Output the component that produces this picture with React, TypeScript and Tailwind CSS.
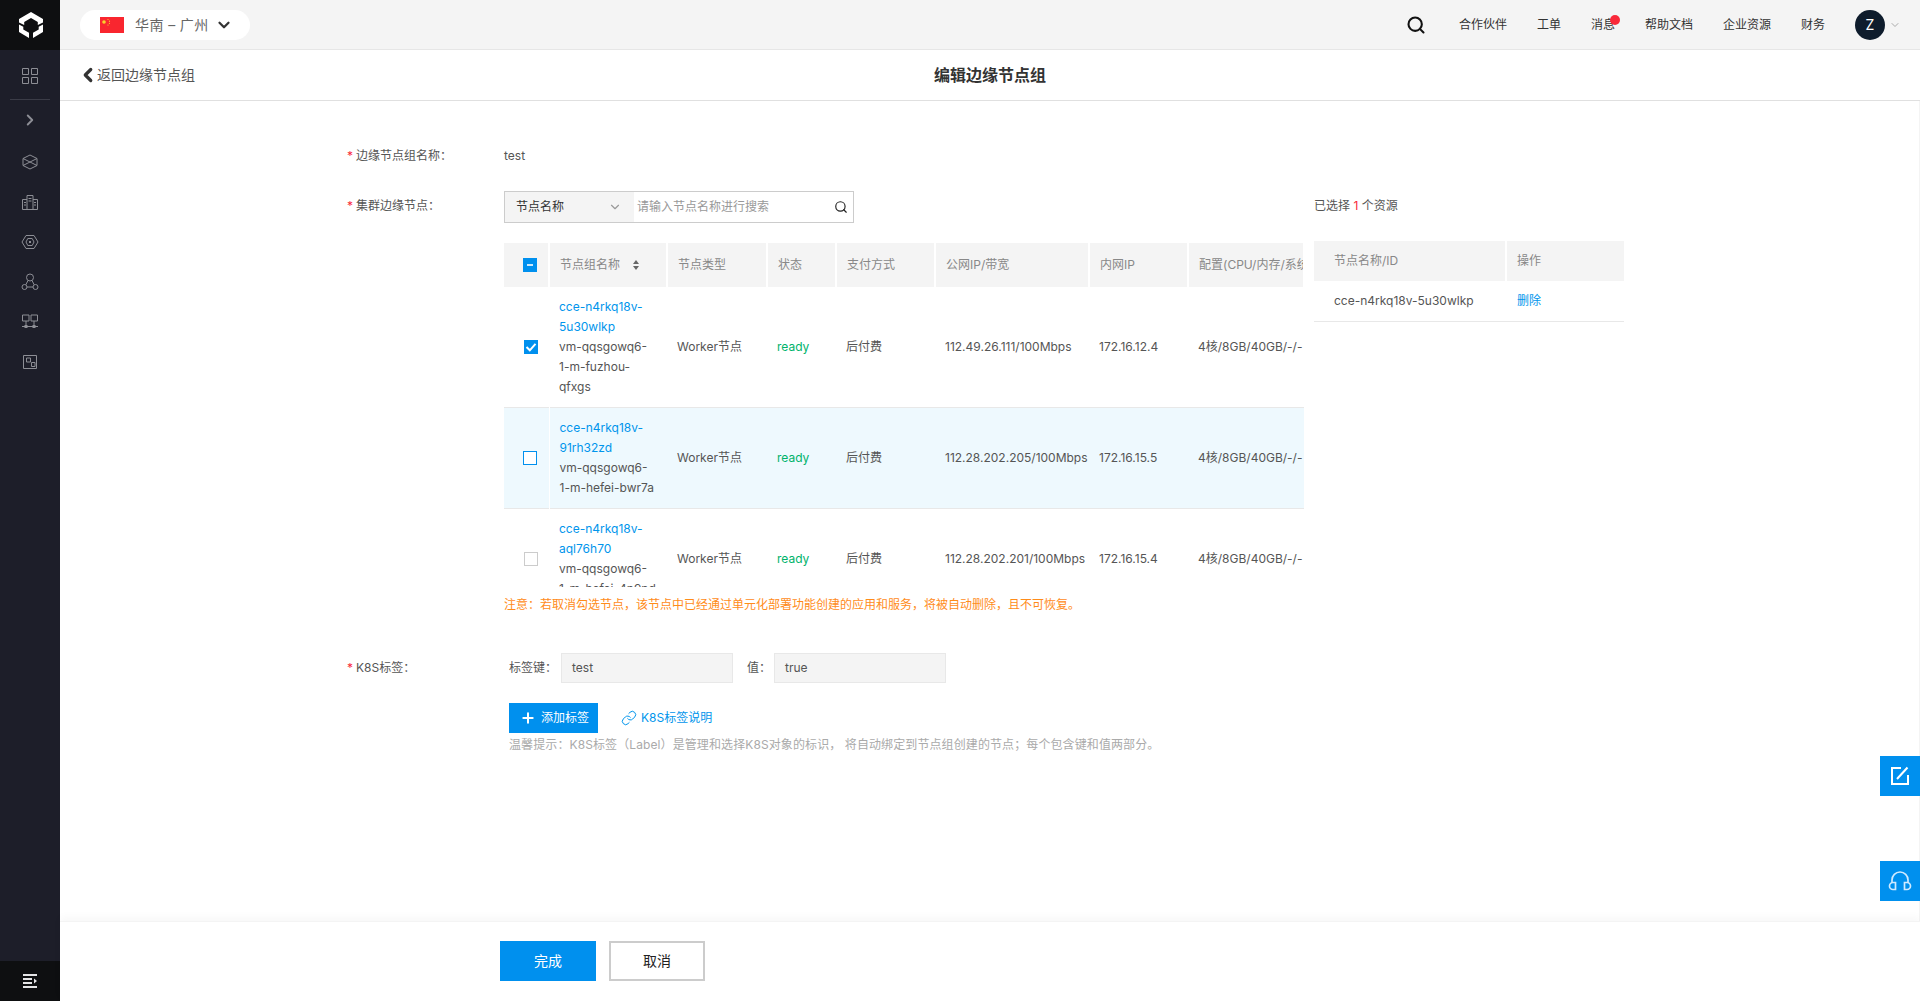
import { ChevronDown, ChevronLeft, ChevronRight, Link, Plus, Search } from "lucide-react";

const NAV_LINKS = ["合作伙伴", "工单", "消息", "帮助文档", "企业资源", "财务"];

const COLUMNS = [
  { label: "节点类型", w: "w-[100px]" },
  { label: "状态", w: "w-[69px]" },
  { label: "支付方式", w: "w-[99px]" },
  { label: "公网IP/带宽", w: "w-[154px]" },
  { label: "内网IP", w: "w-[99px]" },
  { label: "配置(CPU/内存/系统盘/数据盘)", w: "w-[116px]" },
];

const ROWS = [
  { id: ["cce-n4rkq18v-", "5u30wlkp"], name: ["vm-qqsgowq6-", "1-m-fuzhou-", "qfxgs"], ip: "112.49.26.111/100Mbps", lan: "172.16.12.4", state: "checked" },
  { id: ["cce-n4rkq18v-", "91rh32zd"], name: ["vm-qqsgowq6-", "1-m-hefei-bwr7a"], ip: "112.28.202.205/100Mbps", lan: "172.16.15.5", state: "hover" },
  { id: ["cce-n4rkq18v-", "aql76h70"], name: ["vm-qqsgowq6-", "1-m-hefei-4n9nd"], ip: "112.28.202.201/100Mbps", lan: "172.16.15.4", state: "none" },
];

function Logo() {
  return (
    <svg width="26" height="28" viewBox="0 0 26 28" fill="#fff">
      <path d="M13 1 25 8v3.500l-5.200 2.600V11L13 7 6.200 11v3.100L1 11.500V8z" />
      <path d="M1 13.500l4.300 2.200v2.800l5.700 3.300V27L1 21z" />
      <path d="M25 13.500l-4.300 2.200v2.800L15 21.800V27l10-6z" />
    </svg>
  );
}

function SideIcon({ children }: { children: React.ReactNode }) {
  return (
    <div className="h-10 flex items-center justify-center">
      <svg width="18" height="18" viewBox="0 0 18 18" fill="none" stroke="#8d8e95" strokeWidth="1">
        {children}
      </svg>
    </div>
  );
}

function FlagCN() {
  return (
    <svg width="24" height="16" viewBox="0 0 24 16">
      <rect width="24" height="16" fill="#f9262f" />
      <circle cx="4" cy="5" r="1.800" fill="#f8d32b" />
      <circle cx="8" cy="2.500" r="0.600" fill="#f8d32b" />
      <circle cx="9.500" cy="4.200" r="0.600" fill="#f8d32b" />
      <circle cx="9.500" cy="6.300" r="0.600" fill="#f8d32b" />
      <circle cx="8" cy="8" r="0.600" fill="#f8d32b" />
    </svg>
  );
}

function Checkbox({ state }: { state: string }) {
  if (state === "checked") {
    return (
      <span className="w-[14px] h-[14px] bg-[#0090ee] flex items-center justify-center">
        <svg width="12" height="12" viewBox="0 0 12 12" fill="none" stroke="#fff" strokeWidth="2">
          <path d="M1.500 6 4.800 9.300 10.500 2.800" />
        </svg>
      </span>
    );
  }
  if (state === "partial") {
    return (
      <span className="w-[14px] h-[14px] bg-[#0090ee] flex items-center justify-center">
        <span className="w-[6px] h-[2px] bg-white/80" />
      </span>
    );
  }
  return <span className={`w-[14px] h-[14px] border ${state === "hover" ? "border-[#0090ee]" : "border-[#cccccc]"} bg-white`} />;
}

export default function App() {
  return (
    <div className="relative w-full h-[1001px] flex overflow-hidden bg-white text-xs text-[#555] [font-family:Inter,'Noto_Sans_CJK_SC',sans-serif]">
      {/* 侧边栏 */}
      <aside className="w-[60px] shrink-0 flex flex-col bg-[#1d1e29]">
        <div className="h-[50px] bg-[#0e0f11] flex items-center justify-center pl-[2px]">
          <Logo />
        </div>
        <div className="h-[50px] flex items-center justify-center border-b border-[#3b3c47] mx-[10px] pt-[2px]">
          <svg width="18" height="18" viewBox="0 0 18 18" fill="none" stroke="#8d8e95" strokeWidth="1">
            <path d="M1.500 1.500h6v6h-6zM10.500 1.500h6v6h-6zM1.500 10.500h6v6h-6zM10.500 10.500h6v6h-6z" />
          </svg>
        </div>
        <div className="h-[40px] flex items-center justify-center text-[#8d8e95]">
          <ChevronRight size={18} strokeWidth={2.500} />
        </div>
        <div className="flex flex-col mt-[2px]">
          <SideIcon>
            <path d="M9 2 16 5.500v7L9 16 2 12.500v-7zM2 5.500l14 7M16 5.500l-14 7" />
          </SideIcon>
          <SideIcon>
            <path d="M6 16.500V2.500h6v14M1.500 16.500V6.500H6M12 6.500h4.500v10M1.500 16.500h15M7.500 5.500h3M7.500 8h3M3 9.500h2M13 9.500h2M3 12h2M13 12h2" />
          </SideIcon>
          <SideIcon>
            <path d="M5 2.500h8L17 9l-4 6.500H5L1 9zM6.800 5.500h4.400L13 9l-1.800 3.500H6.800L5 9z" />
            <rect x="8" y="8" width="2" height="2" fill="#8d8e95" stroke="none" />
          </SideIcon>
          <SideIcon>
            <circle cx="9" cy="4.500" r="3.500" />
            <circle cx="3.500" cy="14" r="2.500" />
            <circle cx="14.500" cy="14" r="2.500" />
            <path d="M7 7.500 4.800 11.800M11 7.500l2.200 4.300M6 14h6" />
          </SideIcon>
          <SideIcon>
            <path d="M1.500 2h6.500v6H1.500zM10 2h6.500v6H10zM5 8v5M13 8v5M1 13.500h16" />
            <rect x="3.500" y="12" width="3" height="3" fill="#8d8e95" stroke="none" />
            <rect x="11.500" y="12" width="3" height="3" fill="#8d8e95" stroke="none" />
          </SideIcon>
          <SideIcon>
            <path d="M2.500 2.500h13v13h-13zM5.500 5h4v4h-4zM10.500 9.500h3.500v4h-3.500z" />
          </SideIcon>
        </div>
        <div className="mt-auto h-10 bg-[#0e0f11] flex items-center justify-center">
          <svg width="16" height="14" viewBox="0 0 16 14" fill="#e4e4e6">
            <path d="M1 0h14v2H1zM1 4h9v2H1zM1 8h9v2H1zM1 12h14v2H1zM12 4.500 15 7l-3 2.500z" />
          </svg>
        </div>
      </aside>

      <div className="flex-1 min-w-0 flex flex-col">
        {/* 顶部导航 */}
        <header className="h-[50px] shrink-0 flex items-center bg-[#f4f4f4] border-b border-[#e6e6e6] pl-5 pr-[19px]">
          <div className="w-[170px] h-[30px] rounded-full bg-white flex items-center pl-5">
            <FlagCN />
            <span className="ml-[11px] text-sm text-[#666] tracking-[0.4px]">华南 – 广州</span>
            <ChevronDown size={18} strokeWidth={3} className="ml-[6px] text-[#333]" />
          </div>
          <div className="ml-auto flex items-center">
            <Search size={20} strokeWidth={2.500} className="text-[#111] mr-[33px]" />
            <nav className="flex items-center gap-[30px] text-[#333]">
              {NAV_LINKS.map(link => (
                <span key={link} className="relative whitespace-nowrap">
                  {link}
                  {link === "消息" && <span className="absolute -right-[5px] -top-[2px] w-[10px] h-[10px] rounded-full bg-[#f9293a]" />}
                </span>
              ))}
            </nav>
            <div className="ml-[30px] w-[30px] h-[30px] rounded-full bg-[#0e1c2c] flex items-center justify-center text-sm text-white">Z</div>
            <ChevronDown size={12} className="ml-[4px] text-[#aaa]" />
          </div>
        </header>

        {/* 子标题 */}
        <div className="relative h-[51px] shrink-0 flex items-center justify-center border-b border-[#e0e0e0]">
          <div className="absolute left-[17px] top-[14px] flex items-center text-sm text-[#555]">
            <ChevronLeft size={22} strokeWidth={3.500} className="text-[#333] -mr-[2px]" />
            返回边缘节点组
          </div>
          <h1 className="text-base font-semibold text-[#333]">编辑边缘节点组</h1>
        </div>

        {/* 表单 */}
        <main className="flex-1 min-h-0 pl-[287px] pt-[45px] border-r border-[#f4f4f4]">
          <div className="flex h-5 items-center">
            <label className="w-[157px] shrink-0"><span className="text-[#f9293a] mr-[3px]">*</span>边缘节点组名称：</label>
            <span>test</span>
          </div>

          <div className="flex mt-[25px]">
            <label className="w-[157px] shrink-0 pt-[5px] leading-5"><span className="text-[#f9293a] mr-[3px]">*</span>集群边缘节点：</label>
            <div className="w-[800px] shrink-0">
              <div className="w-[350px] h-8 border border-[#cccccc] flex">
                <div className="w-[129px] bg-[#f4f4f4] flex items-center pl-[11px] pr-[12px] text-[#333]">
                  节点名称
                  <ChevronDown size={14} className="ml-auto text-[#999]" />
                </div>
                <div className="flex-1 flex items-center pl-[3px] pr-[4px] text-[#999]">
                  请输入节点名称进行搜索
                  <Search size={14} className="ml-auto mr-[1px] text-[#222]" />
                </div>
              </div>

              <div className="mt-5 h-[344px] overflow-hidden">
                <table className="table-fixed w-[800px] border-collapse">
                  <thead>
                    <tr className="h-[44px] text-[#888] text-left">
                      <th className="w-[45px] bg-[#f4f4f4] border-r-2 border-white font-normal">
                        <span className="flex justify-center pl-[8px]"><Checkbox state="partial" /></span>
                      </th>
                      <th className="w-[118px] bg-[#f4f4f4] border-r-2 border-white font-normal pl-[10px]">
                        <span className="flex items-center">
                          节点组名称
                          <svg width="8" height="12" viewBox="0 0 8 12" fill="#666" className="ml-[12px]">
                            <path d="M4 1 7 5H1zM4 11 1 7h6z" />
                          </svg>
                        </span>
                      </th>
                      {COLUMNS.map(col => (
                        <th key={col.label} className={`${col.w} bg-[#f4f4f4] border-r-2 border-white font-normal pl-[10px] whitespace-nowrap overflow-hidden`}>{col.label}</th>
                      ))}
                    </tr>
                  </thead>
                  <tbody>
                    {ROWS.map(row => (
                      <tr key={row.id[1]} className={`border-b border-[#e8e8e8] ${row.state === "hover" ? "bg-[#eef9fe]" : ""}`}>
                        <td className={`${row.state === "hover" ? "border-r border-white" : ""}`}>
                          <span className="flex justify-center pl-[8px]"><Checkbox state={row.state} /></span>
                        </td>
                        <td className="pl-[10px] py-[10px] leading-5 whitespace-nowrap">
                          {row.id.map(line => <a key={line} className="block text-[#0095ec]">{line}</a>)}
                          {row.name.map(line => <span key={line} className="block">{line}</span>)}
                        </td>
                        <td className="pl-[10px]">Worker节点</td>
                        <td className="pl-[10px] text-[#00b36b]">ready</td>
                        <td className="pl-[10px]">后付费</td>
                        <td className="pl-[10px] whitespace-nowrap">{row.ip}</td>
                        <td className="pl-[10px]">{row.lan}</td>
                        <td className="pl-[10px] whitespace-nowrap">4核/8GB/40GB/-/-</td>
                      </tr>
                    ))}
                  </tbody>
                </table>
              </div>

              <p className="mt-2 leading-5 text-[#ff8c1a]">注意：若取消勾选节点，该节点中已经通过单元化部署功能创建的应用和服务，将被自动删除，且不可恢复。</p>
            </div>

            {/* 已选资源 */}
            <div className="ml-[10px] w-[310px] shrink-0">
              <p className="pt-[5px] leading-5">已选择 <span className="text-[#f9293a]">1</span> 个资源</p>
              <div className="mt-[25px] flex h-10 items-center text-[#888] bg-[#f4f4f4]">
                <div className="w-[193px] h-full flex items-center pl-5 border-r-2 border-white">节点名称/ID</div>
                <div className="pl-[10px]">操作</div>
              </div>
              <div className="flex h-[41px] items-center border-b border-[#e8e8e8]">
                <div className="w-[193px] pl-5">cce-n4rkq18v-5u30wlkp</div>
                <a className="pl-[10px] text-[#0095ec]">删除</a>
              </div>
            </div>
          </div>

          <div className="flex mt-[38px]">
            <label className="w-[157px] shrink-0 pt-[5px] leading-5"><span className="text-[#f9293a] mr-[3px]">*</span>K8S标签：</label>
            <div className="pl-[5px]">
              <div className="flex items-center">
                <span className="w-[52px]">标签键：</span>
                <div className="w-[172px] h-[30px] bg-[#f4f4f4] border border-[#e8e8e8] flex items-center pl-[10px]">test</div>
                <span className="ml-[14px] w-[27px]">值：</span>
                <div className="w-[172px] h-[30px] bg-[#f4f4f4] border border-[#e8e8e8] flex items-center pl-[10px]">true</div>
              </div>
              <div className="flex items-center mt-5">
                <button className="w-[89px] h-[30px] bg-[#0090ee] text-white flex items-center pl-[11px]">
                  <Plus size={16} strokeWidth={3} className="mr-[5px]" />
                  添加标签
                </button>
                <a className="ml-[23px] flex items-center text-[#0095ec]">
                  <Link size={16} strokeWidth={1.500} className="mr-[4px]" />
                  K8S标签说明
                </a>
              </div>
              <p className="mt-[2px] leading-5 text-[#aaa] tracking-[0.1px]">温馨提示：K8S标签（Label）是管理和选择K8S对象的标识， 将自动绑定到节点组创建的节点；每个包含键和值两部分。</p>
            </div>
          </div>
        </main>

        {/* 底部操作 */}
        <footer className="h-20 shrink-0 flex items-center pl-[440px] pb-[1px] gap-[13px] text-sm shadow-[0_-4px_8px_rgba(0,0,0,0.03)] border-t border-[#f4f4f4]">
          <button className="w-[96px] h-10 bg-[#0090ee] text-white">完成</button>
          <button className="w-[96px] h-10 border-2 border-[#cccccc] text-[#222]">取消</button>
        </footer>
      </div>

      {/* 右侧悬浮按钮 */}
      <button className="absolute right-0 top-[756px] w-10 h-10 bg-[#0090ee] flex items-center justify-center">
        <svg width="20" height="20" viewBox="0 0 20 20" fill="none" stroke="#fff" strokeWidth="2">
          <path d="M11 2H2v16h16V9" />
          <path d="M7 13 17.500 1.500" />
        </svg>
      </button>
      <button className="absolute right-0 top-[861px] w-10 h-10 bg-[#0090ee] flex items-center justify-center">
        <svg width="26" height="22" viewBox="0 0 26 22" fill="none" stroke="#cfeaff" strokeWidth="1.700">
          <path d="M5 13V10a8 8 0 0 1 16 0v3" />
          <path d="M8.500 12.500v7H6a3.500 3.500 0 0 1 0-7zM17.500 12.500v7H20a3.500 3.500 0 0 0 0-7z" />
        </svg>
      </button>
    </div>
  );
}
